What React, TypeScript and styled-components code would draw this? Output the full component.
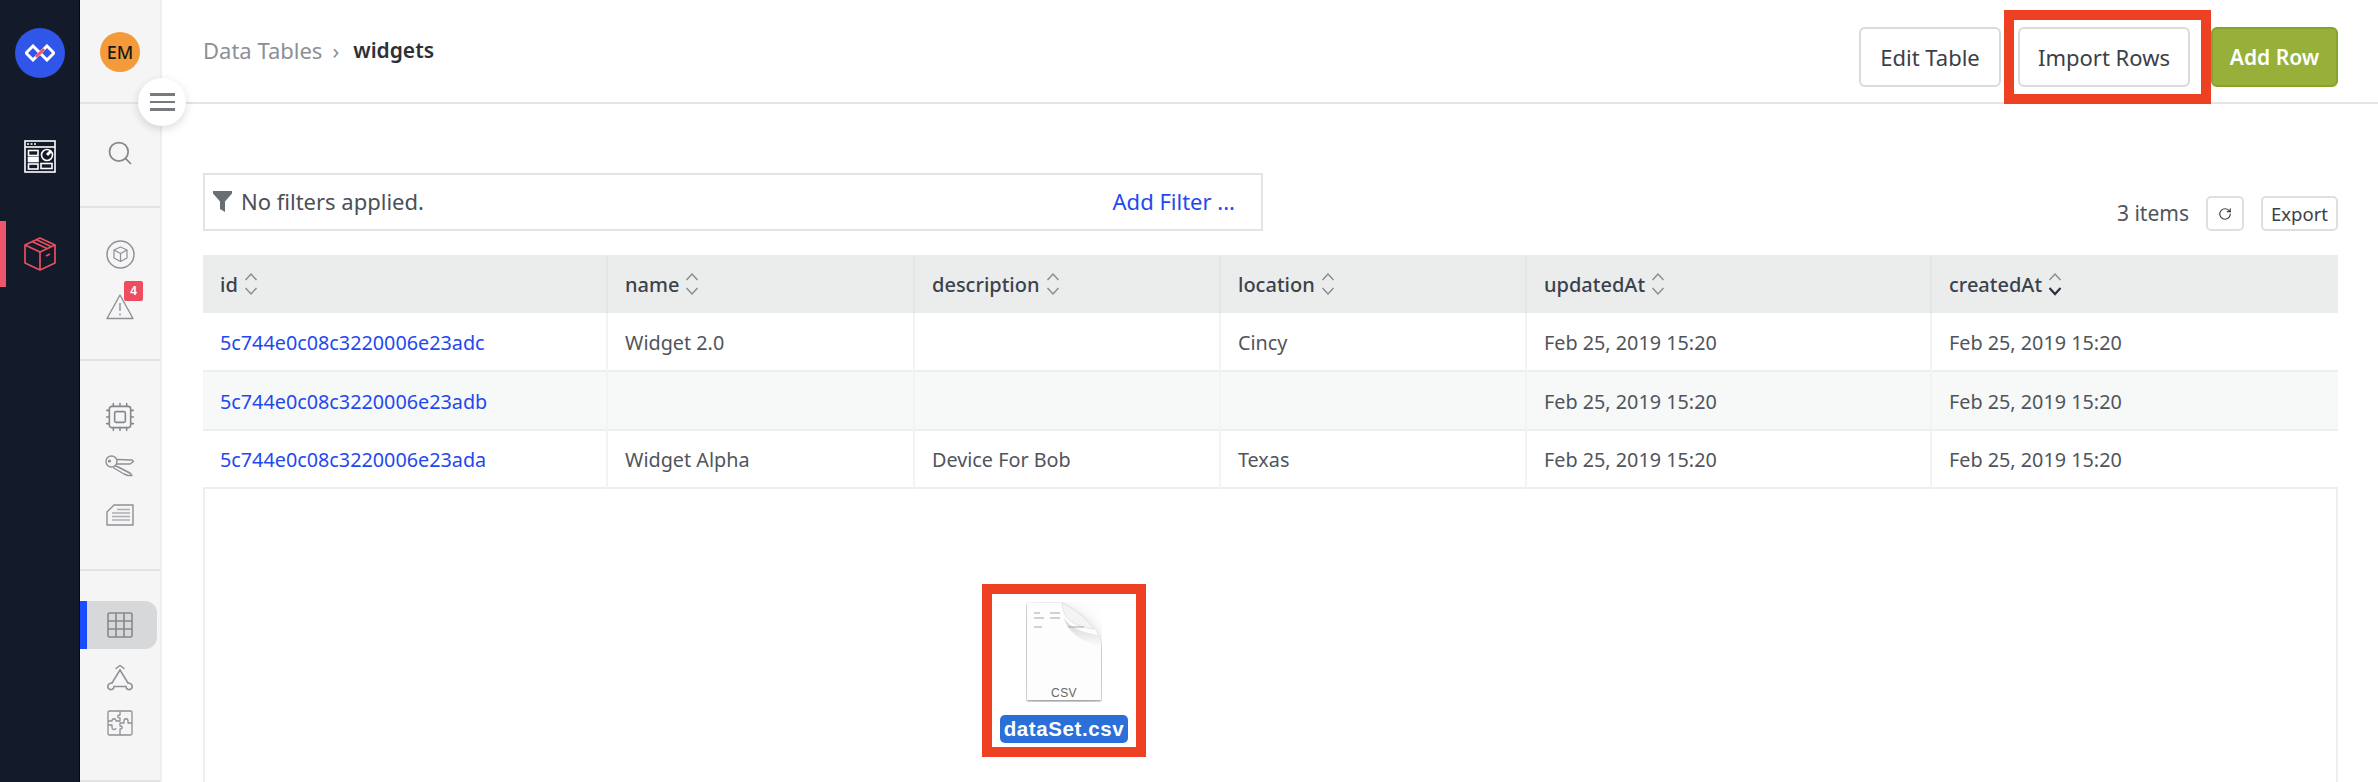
import React from "react";
import styled, { createGlobalStyle } from "styled-components";
import { Cpu, RotateCw, Search } from "lucide-react";

const GlobalStyle = createGlobalStyle`
  html, body { margin: 0; padding: 0; height: 100%; background: #fff; }
  body { font-family: "Noto Sans", "Open Sans", sans-serif; color: #3f4650; overflow: hidden; }
  #root { height: 100%; }
`;

const columns = [
  { title: "id", width: 404 },
  { title: "name", width: 307 },
  { title: "description", width: 306 },
  { title: "location", width: 306 },
  { title: "updatedAt", width: 405 },
  { title: "createdAt", width: 407, sorted: true },
];

const stamp = "Feb 25, 2019 15:20";
const rows = [
  { id: "5c744e0c08c3220006e23adc", name: "Widget 2.0", description: "", location: "Cincy" },
  { id: "5c744e0c08c3220006e23adb", name: "", description: "", location: "" },
  { id: "5c744e0c08c3220006e23ada", name: "Widget Alpha", description: "Device For Bob", location: "Texas" },
];

const LogoMark = () => (
  <svg width="30" height="18" viewBox="0 0 30 18" fill="none">
    <path d="M8 2 L15 9 L8 16 L1 9 Z" stroke="#fff" strokeWidth="3" />
    <path d="M22 2 L29 9 L22 16 L15 9 Z" stroke="#fff" strokeWidth="3" />
    <path d="M11 13 L19 5" stroke="#f0556a" strokeWidth="3" />
  </svg>
);

const DashboardIcon = () => (
  <svg width="32" height="34" viewBox="0 0 32 34" fill="none" stroke="#fff" strokeWidth="1.6">
    <rect x="1" y="1" width="30" height="31" />
    <path d="M1 7 H31" />
    <path d="M3 4 H5 M6.5 4 H8.5 M10 4 H12" />
    <rect x="4.5" y="10.5" width="9.5" height="5" />
    <rect x="4.5" y="17.5" width="9.5" height="4" fill="#fff" />
    <rect x="4.5" y="24" width="9.5" height="5" />
    <circle cx="23" cy="15" r="5.5" />
    <path d="M23 15 L27 11" strokeWidth="3" />
    <rect x="17" y="23.5" width="11" height="5" />
  </svg>
);

const BoxIcon = ({ color }: { color: string }) => (
  <svg width="34" height="36" viewBox="0 0 34 36" fill="none" stroke={color} strokeWidth="1.7" strokeLinejoin="round">
    <path d="M17 2 L32 9 V27 L17 34 L2 27 V9 Z" />
    <path d="M2 9 L17 16 L32 9" />
    <path d="M17 16 V34" />
    <path d="M9 5.5 L24 12.5" />
    <path d="M13 3.5 L28 10.5" />
    <path d="M23 20 L27 18" />
  </svg>
);

const CubeBadgeIcon = () => (
  <svg width="29" height="29" viewBox="0 0 29 29" fill="none" stroke="#8d9095" strokeWidth="1.2" strokeLinejoin="round">
    <circle cx="14.5" cy="14.5" r="13.5" strokeWidth="1.5" />
    <path d="M14.5 7 L21 10 V18 L14.5 21.5 L8 18 V10 Z" />
    <path d="M8 10 L14.5 13.5 L21 10 M14.5 13.5 V21.5" />
  </svg>
);

const WarningIcon = () => (
  <svg width="28" height="27" viewBox="0 0 28 27" fill="none" stroke="#8d9095" strokeWidth="1.4" strokeLinejoin="round">
    <path d="M14 2 L27 25.5 H1 Z" />
    <path d="M14 10 V18 M14 20.5 V22.5" />
  </svg>
);

const KeysIcon = () => (
  <svg width="30" height="22" viewBox="0 0 30 22" fill="none" stroke="#8d9095" strokeWidth="1.4" strokeLinejoin="round">
    <circle cx="6.5" cy="6.5" r="5.5" />
    <circle cx="4.5" cy="6" r="0.9" fill="#8d9095" />
    <path d="M12 4.5 L27 5 L28.5 6.5 L25 9 L12 9" />
    <path d="M10 10.5 L25 18 L27 20.5 L23 20.5 L19 19 L8 12.5" />
    <path d="M14 12 L24 18" strokeWidth="1" />
  </svg>
);

const CardIcon = () => (
  <svg width="28" height="22" viewBox="0 0 28 22" fill="none" stroke="#8d9095" strokeWidth="1.4" strokeLinejoin="round">
    <path d="M8 1 H27 V21 H1 V8 Z" />
    <path d="M11 5.5 H24 M6 9 H24 M6 12.5 H24 M6 16 H24" strokeWidth="1.3" opacity="0.7" />
  </svg>
);

const GridIcon = () => (
  <svg width="26" height="26" viewBox="0 0 26 26" fill="none" stroke="#85888d" strokeWidth="1.6">
    <rect x="1" y="1" width="24" height="24" rx="1.5" />
    <path d="M9 1 V25 M17 1 V25 M1 9 H25 M1 17 H25" />
  </svg>
);

const GraphIcon = () => (
  <svg width="28" height="27" viewBox="0 0 28 27" fill="none" stroke="#8d9095" strokeWidth="1.5" strokeLinecap="round" strokeLinejoin="round">
    <path d="M14 6 L6 19" />
    <path d="M14 6 L22 19" />
    <path d="M8 22.5 H20" />
    <path d="M10 4.5 L14 1.5 L18 4.5" />
    <path d="M6 19 C2 19 0.5 23 3 25 C5.5 26.5 8 25 8 22.5" />
    <path d="M22 19 C26 19 27.5 23 25 25 C22.5 26.5 20 25 20 22.5" />
  </svg>
);

const PuzzleIcon = () => (
  <svg width="26" height="26" viewBox="0 0 26 26" fill="none" stroke="#8d9095" strokeWidth="1.3" strokeLinejoin="round">
    <rect x="1" y="1" width="24" height="24" rx="1.5" />
    <path d="M13 1 V5 C10 5 10 8 13 8 V11 H9 C9 8 5 8 5 11 H1" />
    <path d="M25 13 H21 V11 C21 8 17 8 17 11 V13 H13 V16 C16 16 16 19 13 19 V25" />
    <path d="M1 15 H5 V18 C5 20 9 20 9 18" />
  </svg>
);

const FunnelIcon = () => (
  <svg width="19" height="21" viewBox="0 0 19 21" fill="#6a6f75">
    <path d="M0 0 H19 V2.5 L12 10.5 V21 L7 18 V10.5 L0 2.5 Z" />
  </svg>
);

const SortIcon = ({ active }: { active?: boolean }) => (
  <svg width="14" height="24" viewBox="0 0 14 24" fill="none" stroke="#858b90" strokeWidth="1.4">
    <path d="M1.5 8 L7 2 L12.5 8" />
    <path d="M1.5 16 L7 22 L12.5 16" stroke={active ? "#2c3138" : "#858b90"} strokeWidth={active ? 2.2 : 1.4} />
  </svg>
);

const FileIcon = () => (
  <svg width="76" height="100" viewBox="0 0 76 100" fill="none">
    <defs>
      <filter id="file-shadow" x="-50%" y="-30%" width="200%" height="170%">
        <feDropShadow dx="0" dy="1" stdDeviation="1.2" floodColor="#000" floodOpacity="0.4" />
        <feDropShadow dx="0" dy="4" stdDeviation="9" floodColor="#000" floodOpacity="0.16" />
      </filter>
      <linearGradient id="fold-shade" x1="0" y1="0" x2="0" y2="1">
        <stop offset="0" stopColor="#cfcfcf" />
        <stop offset="1" stopColor="#fbfbfb" />
      </linearGradient>
    </defs>
    <path d="M1 1 H36 C50 8 60 16 68 26 C72 32 75 38 75 46 V98 H1 Z" fill="#fdfdfd" filter="url(#file-shadow)" />
    <path d="M38 16 C44 26 56 30 72 33 L75 44 C62 40 44 36 38 16 Z" fill="url(#fold-shade)" />
    <path d="M36 1 C37 14 44 24 68 27 C60 16 50 8 36 1 Z" fill="#f4f4f4" stroke="#d4d4d4" strokeWidth="0.6" />
    <path d="M8 11 H14 M24 11 H34 M8 16 H18 M24 16 H34 M8 25 H16 M42 25 H58" stroke="#a5a5a5" strokeWidth="1" />
  </svg>
);

const Page = styled.div`
  display: flex;
  height: 782px;
`;

const Rail = styled.nav`
  width: 80px;
  flex: none;
  box-sizing: border-box;
  background: #131a2a;
  border-right: 1px solid #06090f;
  display: flex;
  flex-direction: column;
  align-items: center;
  padding-top: 28px;
`;

const LogoCircle = styled.div`
  width: 50px;
  height: 50px;
  border-radius: 50%;
  background: #2f55e9;
  display: flex;
  align-items: center;
  justify-content: center;
  margin-bottom: 46px;
`;

const RailItem = styled.div<{ $active?: boolean }>`
  position: relative;
  align-self: stretch;
  height: 66px;
  margin-bottom: 31px;
  padding-left: 1px;
  display: flex;
  align-items: center;
  justify-content: center;
  &::before {
    content: "";
    display: ${(p) => (p.$active ? "block" : "none")};
    position: absolute;
    left: 0;
    top: 0;
    bottom: 0;
    width: 6px;
    background: #f0566b;
  }
`;

const SubNav = styled.nav`
  position: relative;
  width: 82px;
  flex: none;
  box-sizing: border-box;
  background: #f5f5f6;
  border-right: 2px solid #eeeeef;
  display: flex;
  flex-direction: column;
`;

const NavSection = styled.div<{ $height: number; $top: number }>`
  height: ${(p) => p.$height}px;
  padding-top: ${(p) => p.$top}px;
  box-sizing: border-box;
  border-bottom: 2px solid #e2e3e4;
  display: flex;
  flex-direction: column;
`;

const NavItem = styled.div<{ $height: number; $active?: boolean }>`
  position: relative;
  height: ${(p) => p.$height}px;
  flex: none;
  display: flex;
  align-items: center;
  justify-content: center;
  color: #85888d;
  ${(p) =>
    p.$active &&
    `
    background: #d7d8da;
    border-left: 7px solid #1a4cff;
    border-radius: 0 12px 12px 0;
    margin-right: 3px;
    margin-bottom: 5px;
    padding-right: 5px;
    box-sizing: border-box;
  `}
`;

const Avatar = styled.div`
  width: 40px;
  height: 40px;
  border-radius: 50%;
  background: #f39b3a;
  color: #1c1a14;
  font-size: 18px;
  font-weight: 500;
  display: flex;
  align-items: center;
  justify-content: center;
`;

const Badge = styled.span`
  position: absolute;
  left: 44px;
  top: 1px;
  width: 19px;
  height: 20px;
  border-radius: 2px;
  background: #ee4d5f;
  color: #fff;
  font: 700 12px "Liberation Sans", sans-serif;
  display: flex;
  align-items: center;
  justify-content: center;
`;

const MenuToggle = styled.button`
  position: absolute;
  left: 58px;
  top: 78px;
  width: 48px;
  height: 48px;
  padding: 0;
  border: none;
  border-radius: 50%;
  background: #fff;
  box-shadow: 0 3px 10px rgba(0, 0, 0, 0.14);
  display: flex;
  flex-direction: column;
  align-items: center;
  justify-content: center;
  gap: 5px;
  z-index: 2;
`;

const MenuLine = styled.span`
  width: 25px;
  height: 2.5px;
  background: #777b80;
`;

const Main = styled.main`
  flex: 1;
  min-width: 0;
  display: flex;
  flex-direction: column;
`;

const Header = styled.header`
  height: 104px;
  flex: none;
  box-sizing: border-box;
  border-bottom: 2px solid #e3e5e5;
  padding: 27px 40px 0 41px;
  display: flex;
  justify-content: space-between;
  align-items: flex-start;
`;

const Breadcrumbs = styled.div`
  display: flex;
  align-items: center;
  gap: 10px;
  height: 44px;
  margin-top: 1px;
  font-size: 22px;
  color: #8b9096;
`;

const Current = styled.span`
  color: #2c3138;
  font-size: 21px;
  font-weight: 600;
  margin-left: 4px;
`;

const HeaderActions = styled.div`
  display: flex;
  align-items: flex-start;
`;

const Button = styled.button<{ $primary?: boolean; $width: number }>`
  width: ${(p) => p.$width}px;
  height: 60px;
  padding: 0;
  border-radius: 6px;
  font-family: inherit;
  font-size: ${(p) => (p.$primary ? 21 : 22)}px;
  font-weight: ${(p) => (p.$primary ? 600 : 400)};
  border: 2px solid ${(p) => (p.$primary ? "#86a32c" : "#d9dadb")};
  background: ${(p) => (p.$primary ? "#96b03a" : "#fff")};
  color: ${(p) => (p.$primary ? "#fff" : "#3b4048")};
`;

const Highlighted = styled.div`
  position: relative;
  margin: 0 21px 0 17px;
  &::after {
    content: "";
    position: absolute;
    left: -14px;
    right: -21px;
    top: -17px;
    bottom: -17px;
    border: 10px solid #ee4023;
    pointer-events: none;
  }
`;

const Content = styled.div`
  flex: 1;
  min-height: 0;
  padding: 69px 40px 0 41px;
  display: flex;
  flex-direction: column;
`;

const Toolbar = styled.div`
  display: flex;
  align-items: flex-end;
  justify-content: space-between;
  margin-bottom: 24px;
`;

const FilterBox = styled.div`
  width: 1060px;
  height: 58px;
  box-sizing: border-box;
  border: 2px solid #e3e4e5;
  padding: 0 26px 2px 8px;
  display: flex;
  align-items: center;
  font-size: 22px;
  color: #4b5058;
`;

const FilterLabel = styled.span`
  margin-left: 9px;
  flex: 1;
`;

const FilterLink = styled.span`
  color: #1f49f0;
`;

const TableMeta = styled.div`
  display: flex;
  align-items: center;
`;

const ItemCount = styled.span`
  font-size: 21px;
  color: #50555c;
  margin: 0 17px 2px 0;
`;

const SmallButton = styled.button<{ $width: number; $gap?: number }>`
  width: ${(p) => p.$width}px;
  height: 35px;
  padding: 0;
  margin-left: ${(p) => p.$gap ?? 0}px;
  border: 2px solid #dedfe0;
  border-radius: 5px;
  background: #fff;
  color: #3b4048;
  font-family: inherit;
  font-size: 18.5px;
  display: flex;
  align-items: center;
  justify-content: center;
`;

const TableFrame = styled.div`
  flex: 1;
  min-height: 0;
  border-left: 2px solid #eeeeef;
  border-right: 2px solid #eeeeef;
  position: relative;
`;

const DataTable = styled.table`
  table-layout: fixed;
  border-collapse: collapse;
  margin-left: -2px;
  width: calc(100% + 4px);
`;

const HeadCell = styled.th`
  height: 58px;
  padding: 0 0 0 17px;
  background: #ebeded;
  border-left: 2px solid #e4e6e6;
  text-align: left;
  font-size: 20px;
  font-weight: 500;
  color: #3c424b;
  &:first-child {
    border-left: none;
  }
`;

const HeadInner = styled.span`
  display: inline-flex;
  align-items: center;
  gap: 6px;
`;

const BodyRow = styled.tr<{ $striped?: boolean }>`
  background: ${(p) => (p.$striped ? "#f7f8f8" : "#fff")};
  border-bottom: 2px solid #eeeeef;
`;

const Cell = styled.td`
  height: 58.4px;
  padding: 1px 0 0 17px;
  box-sizing: border-box;
  border-left: 2px solid #f3f3f4;
  font-size: 19.8px;
  color: #50555c;
  white-space: nowrap;
  &:first-child {
    border-left: none;
  }
`;

const IdLink = styled.a`
  color: #1f49f0;
`;

const DraggedFile = styled.div`
  position: absolute;
  left: 777px;
  top: 329px;
  width: 164px;
  height: 173px;
  box-sizing: border-box;
  border: 10px solid #ee4023;
  padding-top: 8px;
  display: flex;
  flex-direction: column;
  align-items: center;
`;

const FileName = styled.div`
  position: relative;
  width: 128px;
  height: 28px;
  margin-top: 13px;
  border-radius: 5px;
  background: #2b6fd9;
  color: #fff;
  font: 700 20.5px/28px "Liberation Sans", sans-serif;
  letter-spacing: 0.6px;
  text-align: center;
  white-space: nowrap;
`;

const FileType = styled.span`
  position: absolute;
  left: 50%;
  top: 84px;
  transform: translateX(-50%);
  font: 400 12px "Liberation Sans", sans-serif;
  letter-spacing: 0.4px;
  color: #666;
`;

const FilePreview = styled.div`
  position: relative;
  height: 100px;
  flex: none;
`;

export default function App() {
  return (
    <Page>
      <GlobalStyle />
      <Rail>
        <LogoCircle>
          <LogoMark />
        </LogoCircle>
        <RailItem>
          <DashboardIcon />
        </RailItem>
        <RailItem $active>
          <BoxIcon color="#e8505f" />
        </RailItem>
      </Rail>
      <SubNav>
        <NavSection $height={104} $top={28}>
          <NavItem $height={48}>
            <Avatar>EM</Avatar>
          </NavItem>
        </NavSection>
        <NavSection $height={104} $top={25}>
          <NavItem $height={48}>
            <Search size={28} strokeWidth={1.5} />
          </NavItem>
        </NavSection>
        <NavSection $height={153} $top={20}>
          <NavItem $height={52}>
            <CubeBadgeIcon />
          </NavItem>
          <NavItem $height={52}>
            <WarningIcon />
            <Badge>4</Badge>
          </NavItem>
        </NavSection>
        <NavSection $height={210} $top={32}>
          <NavItem $height={48}>
            <Cpu size={32} strokeWidth={1.2} />
          </NavItem>
          <NavItem $height={49}>
            <KeysIcon />
          </NavItem>
          <NavItem $height={49}>
            <CardIcon />
          </NavItem>
        </NavSection>
        <NavSection $height={211} $top={30}>
          <NavItem $height={48} $active>
            <GridIcon />
          </NavItem>
          <NavItem $height={46}>
            <GraphIcon />
          </NavItem>
          <NavItem $height={46}>
            <PuzzleIcon />
          </NavItem>
        </NavSection>
        <MenuToggle aria-label="Toggle menu">
          <MenuLine />
          <MenuLine />
          <MenuLine />
        </MenuToggle>
      </SubNav>
      <Main>
        <Header>
          <Breadcrumbs>
            <span>Data Tables</span>
            <span>›</span>
            <Current>widgets</Current>
          </Breadcrumbs>
          <HeaderActions>
            <Button $width={142}>Edit Table</Button>
            <Highlighted>
              <Button $width={172}>Import Rows</Button>
            </Highlighted>
            <Button $width={127} $primary>
              Add Row
            </Button>
          </HeaderActions>
        </Header>
        <Content>
          <Toolbar>
            <FilterBox>
              <FunnelIcon />
              <FilterLabel>No filters applied.</FilterLabel>
              <FilterLink>Add Filter ...</FilterLink>
            </FilterBox>
            <TableMeta>
              <ItemCount>3 items</ItemCount>
              <SmallButton $width={38}>
                <RotateCw size={14} strokeWidth={2} />
              </SmallButton>
              <SmallButton $width={77} $gap={17}>
                Export
              </SmallButton>
            </TableMeta>
          </Toolbar>
          <TableFrame>
            <DataTable>
              <colgroup>
                {columns.map((c) => (
                  <col key={c.title} width={c.width} />
                ))}
              </colgroup>
              <thead>
                <tr>
                  {columns.map((c) => (
                    <HeadCell key={c.title}>
                      <HeadInner>
                        {c.title}
                        <SortIcon active={c.sorted} />
                      </HeadInner>
                    </HeadCell>
                  ))}
                </tr>
              </thead>
              <tbody>
                {rows.map((r, i) => (
                  <BodyRow key={r.id} $striped={i % 2 === 1}>
                    <Cell>
                      <IdLink>{r.id}</IdLink>
                    </Cell>
                    <Cell>{r.name}</Cell>
                    <Cell>{r.description}</Cell>
                    <Cell>{r.location}</Cell>
                    <Cell>{stamp}</Cell>
                    <Cell>{stamp}</Cell>
                  </BodyRow>
                ))}
              </tbody>
            </DataTable>
            <DraggedFile>
              <FilePreview>
                <FileIcon />
                <FileType>CSV</FileType>
              </FilePreview>
              <FileName>dataSet.csv</FileName>
            </DraggedFile>
          </TableFrame>
        </Content>
      </Main>
    </Page>
  );
}
